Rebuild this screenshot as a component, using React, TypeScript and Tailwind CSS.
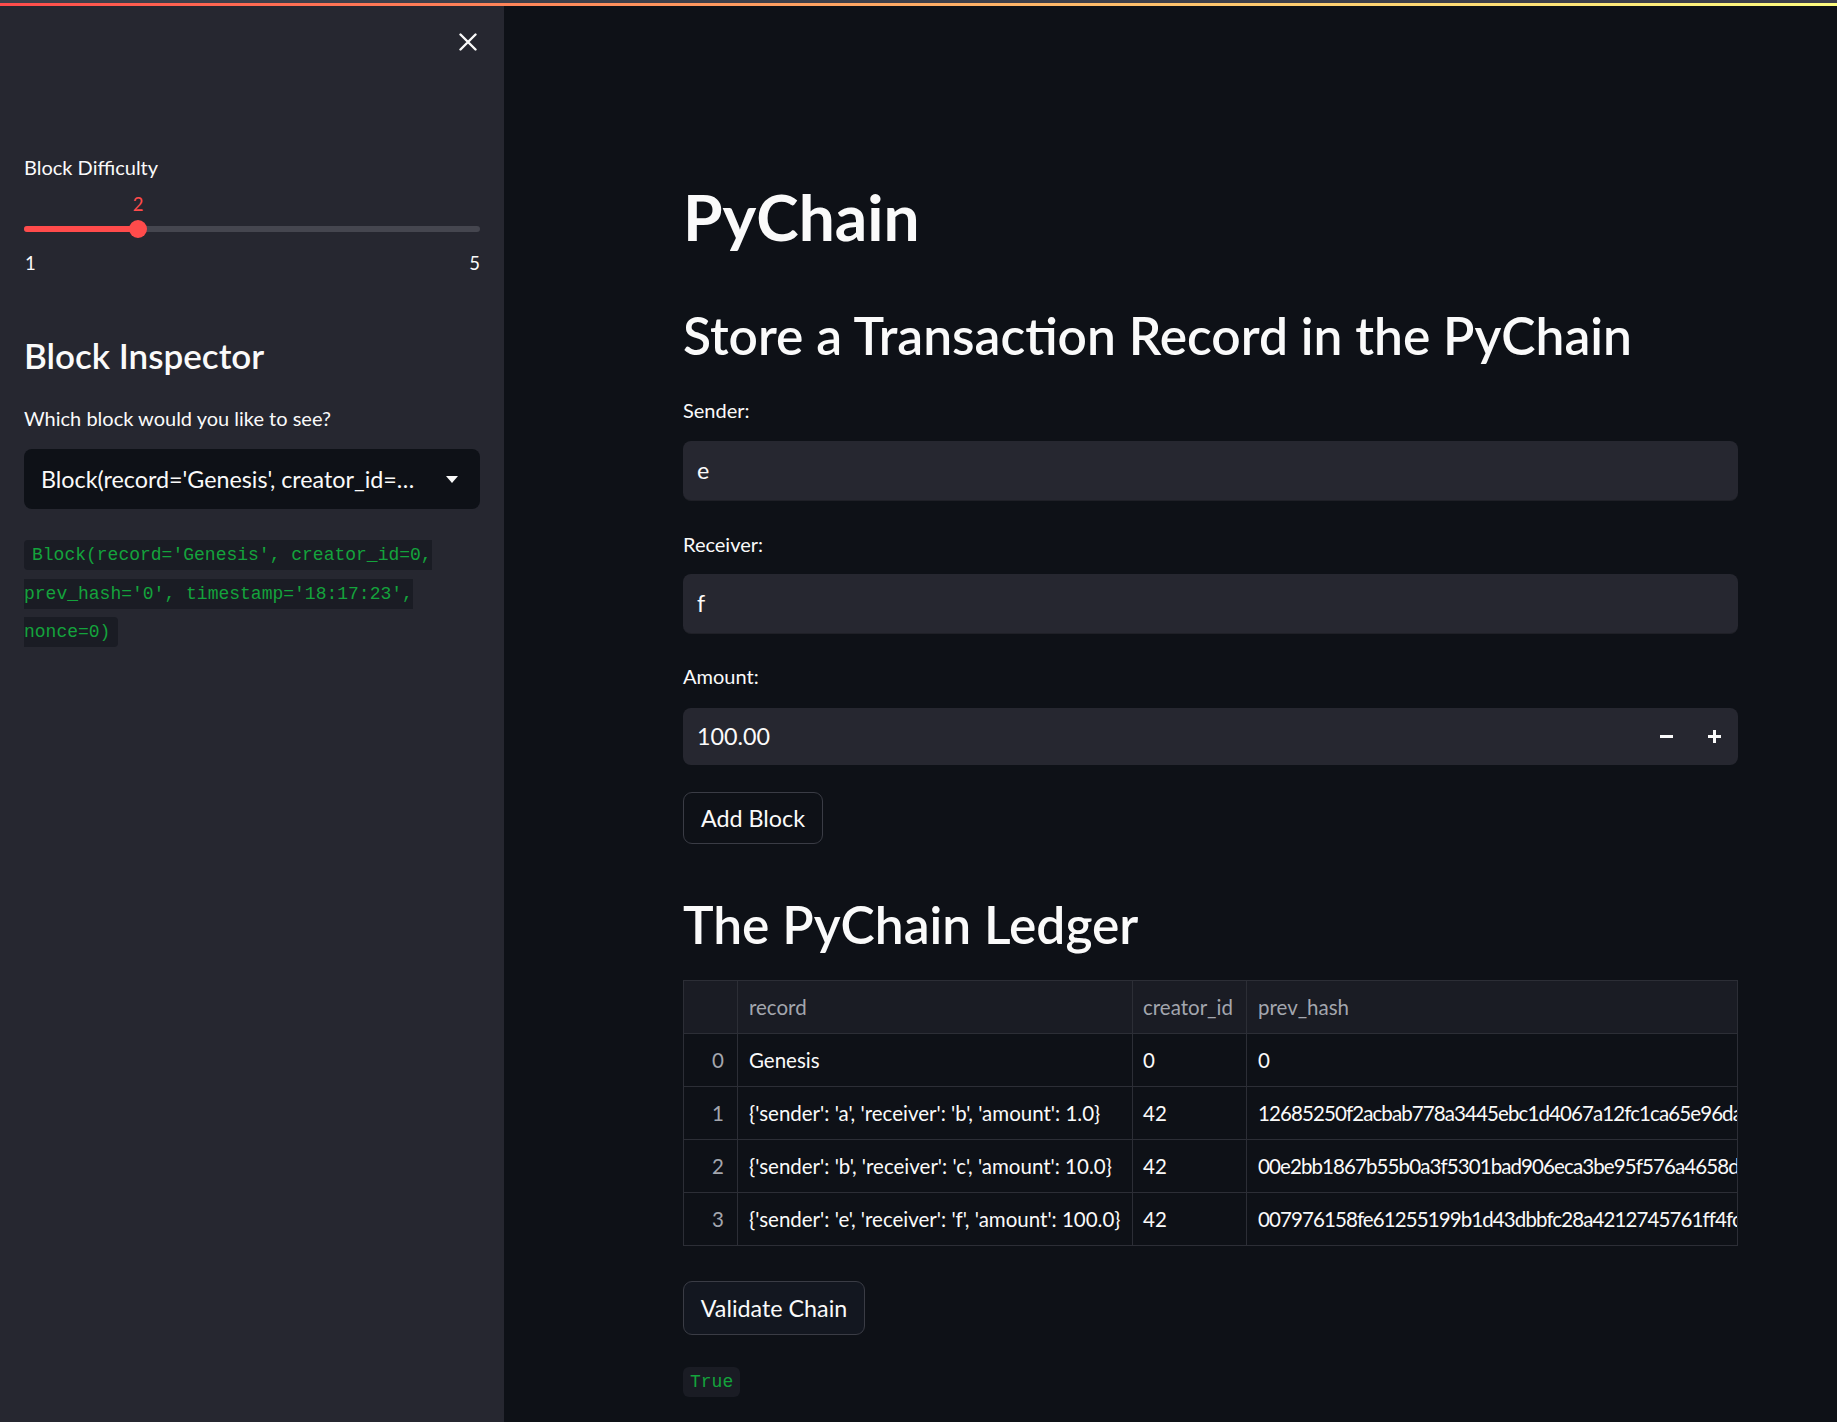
import React from "react";

const rows = [
  { i: 0, record: "Genesis", creator: "0", hash: "0" },
  { i: 1, record: "{'sender': 'a', 'receiver': 'b', 'amount': 1.0}", creator: "42", hash: "12685250f2acbab778a3445ebc1d4067a12fc1ca65e96da3" },
  { i: 2, record: "{'sender': 'b', 'receiver': 'c', 'amount': 10.0}", creator: "42", hash: "00e2bb1867b55b0a3f5301bad906eca3be95f576a4658d2c" },
  { i: 3, record: "{'sender': 'e', 'receiver': 'f', 'amount': 100.0}", creator: "42", hash: "007976158fe61255199b1d43dbbfc28a4212745761ff4fcc1" },
];

function Slider({ value, min, max }: { value: number; min: number; max: number }) {
  const pct = ((value - min) / (max - min)) * 100;
  return (
    <div className="flex flex-col">
      <div className="relative mt-[14px] h-[22px]">
        <span
          className="absolute top-0 -translate-x-1/2 text-[18.5px] leading-[22px] text-[#ff4b4b]"
          style={{ left: `${pct}%` }}
        >
          {value}
        </span>
      </div>
      <div className="relative mt-[5px] flex h-[18px] items-center">
        <div className="h-[6px] w-full rounded-full bg-[#45464f]" />
        <div className="absolute left-0 h-[6px] rounded-full bg-[#ff4b4b]" style={{ width: `${pct}%` }} />
        <div
          className="absolute top-0 h-[18px] w-[18px] -translate-x-1/2 rounded-full bg-[#ff4b4b]"
          style={{ left: `${pct}%` }}
        />
      </div>
      <div className="mt-[14px] flex h-[22px] justify-between pl-[1px] text-[18.5px] leading-[22px] text-[#fafafa]">
        <span>{min}</span>
        <span>{max}</span>
      </div>
    </div>
  );
}

function Label({ children }: { children: React.ReactNode }) {
  return <div className="h-[24px] text-[20px] leading-[24px] text-[#fafafa]">{children}</div>;
}

function TextInput({ value }: { value: string }) {
  return (
    <div className="flex h-[60px] items-center rounded-[8px] border-b border-[#1f2027] bg-[#262730] px-[14px] text-[23.3px] text-[#fafafa]">
      {value}
    </div>
  );
}

export default function App() {
  return (
    <div className="flex min-h-screen flex-col bg-[#0e1117] font-[Lato,sans-serif] text-[#fafafa]">
      <div className="h-[3px] bg-[#3d3f4a]" />
      <div className="h-[3px] bg-linear-to-r from-[#ff4b4b] to-[#fffd80]" />
      <div className="flex flex-1">
        <aside className="w-[504px] shrink-0 bg-[#262730] px-[24px]">
          <div className="flex justify-end pr-[3px] pt-[27px]">
            <svg width="18" height="18" viewBox="0 0 18 18" fill="none" stroke="#fafafa" strokeWidth="2.4" strokeLinecap="round">
              <path d="M1.5 1.5L16.5 16.5M16.5 1.5L1.5 16.5" />
            </svg>
          </div>
          <div className="mt-[104px]">
            <Label>Block Difficulty</Label>
          </div>
          <Slider value={2} min={1} max={5} />
          <div className="mt-[60px] h-[42px] text-[35px] font-semibold leading-[42px] text-[#fafafa]">Block Inspector</div>
          <div className="mt-[30px]">
            <Label>Which block would you like to see?</Label>
          </div>
          <div className="mt-[19px] flex h-[60px] items-center justify-between rounded-[8px] bg-[#0e1117] pl-[17px] pr-[22px]">
            <span className="whitespace-nowrap text-[23.3px] text-[#fafafa]">Block(record='Genesis', creator_id=…</span>
            <svg width="12" height="7" viewBox="0 0 12 7">
              <path d="M0 0H12L6 7Z" fill="#fafafa" />
            </svg>
          </div>
          <div className="mt-[27px] font-['Liberation_Mono',monospace] text-[18px] leading-[38.5px] text-[#14a33c]">
            <code className="rounded-[4px] bg-[#1a1c24] px-[8px] py-[5px]">
              Block(record='Genesis', creator_id=0, prev_hash='0', timestamp='18:17:23', nonce=0)
            </code>
          </div>
        </aside>

        <main className="flex-1 pl-[179px]">
          <div className="flex w-[1055px] flex-col pt-[172px] pb-[24px]">
            <h1 className="h-[77px] text-[64px] font-bold leading-[77px]">PyChain</h1>
            <h2 className="mt-[49px] h-[62px] text-[51.5px] font-semibold leading-[62px]">
              Store a Transaction Record in the PyChain
            </h2>
            <div className="mt-[32px]">
              <Label>Sender:</Label>
            </div>
            <div className="mt-[19px]">
              <TextInput value="e" />
            </div>
            <div className="mt-[31px]">
              <Label>Receiver:</Label>
            </div>
            <div className="mt-[18px]">
              <TextInput value="f" />
            </div>
            <div className="mt-[30px]">
              <Label>Amount:</Label>
            </div>
            <div className="mt-[20px] flex h-[57px] items-center rounded-[8px] bg-[#262730] pl-[14px]">
              <span className="flex-1 text-[23.3px] text-[#fafafa]">100.00</span>
              <div className="flex h-full w-[48px] items-center justify-center">
                <svg width="13" height="13" viewBox="0 0 13 13">
                  <rect x="0" y="5" width="13" height="3" fill="#fafafa" />
                </svg>
              </div>
              <div className="flex h-full w-[48px] items-center justify-center">
                <svg width="13" height="13" viewBox="0 0 13 13">
                  <rect x="0" y="5" width="13" height="3" fill="#fafafa" />
                  <rect x="5" y="0" width="3" height="13" fill="#fafafa" />
                </svg>
              </div>
            </div>
            <div className="mt-[27px]">
              <button className="flex h-[52px] w-[140px] items-center justify-center rounded-[9px] border border-[#3a3c45] bg-[#0e1117] text-[23.3px] text-[#fafafa]">
                Add Block
              </button>
            </div>
            <h2 className="mt-[49px] h-[62px] text-[51.5px] font-semibold leading-[62px]">The PyChain Ledger</h2>
            <div className="mt-[25px]">
              <table className="w-full table-fixed border-collapse text-[20.5px]">
                <colgroup>
                  <col className="w-[54px]" />
                  <col className="w-[395px]" />
                  <col className="w-[114px]" />
                  <col />
                </colgroup>
                <thead>
                  <tr className="h-[53px] bg-[#1a1c24]">
                    <th className="border border-[#2c2e36]" />
                    <th className="overflow-hidden whitespace-nowrap border border-[#2c2e36] pl-[11px] text-left font-normal text-[#a3a6ae]">record</th>
                    <th className="overflow-hidden whitespace-nowrap border border-[#2c2e36] pl-[10px] text-left font-normal text-[#a3a6ae]">creator_id</th>
                    <th className="overflow-hidden whitespace-nowrap border border-[#2c2e36] pl-[11px] text-left font-normal text-[#a3a6ae]">prev_hash</th>
                  </tr>
                </thead>
                <tbody>
                  {rows.map((r) => (
                    <tr key={r.i} className="h-[53px] bg-[#0e1117]">
                      <td className="border border-[#2c2e36] pr-[13px] text-right text-[#a3a6ae]">{r.i}</td>
                      <td className="overflow-hidden whitespace-nowrap border border-[#2c2e36] pl-[11px] text-[#fafafa]">{r.record}</td>
                      <td className="overflow-hidden whitespace-nowrap border border-[#2c2e36] pl-[10px] text-[#fafafa]">{r.creator}</td>
                      <td className="overflow-hidden whitespace-nowrap border border-[#2c2e36] pl-[11px] tracking-[-0.9px] text-[#fafafa]">{r.hash}</td>
                    </tr>
                  ))}
                </tbody>
              </table>
            </div>
            <div className="mt-[35px]">
              <button className="flex h-[54px] w-[182px] items-center justify-center rounded-[9px] border border-[#3a3c45] bg-[#131720] text-[23.3px] text-[#fafafa]">
                Validate Chain
              </button>
            </div>
            <div className="mt-[28px] font-['Liberation_Mono',monospace] text-[18px] leading-[38.5px] text-[#14a33c]">
              <code className="rounded-[6px] bg-[#1a1c24] px-[7px] py-[5px]">True</code>
            </div>
          </div>
        </main>
      </div>
    </div>
  );
}
